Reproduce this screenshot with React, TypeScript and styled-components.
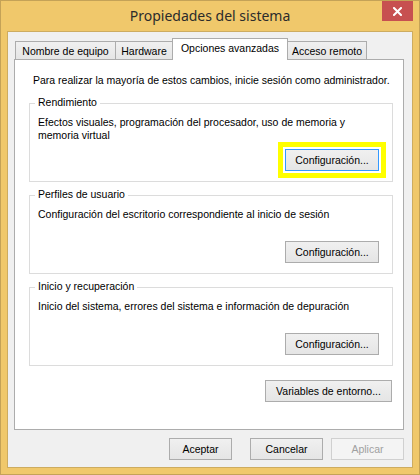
import React from "react";
import styled, { createGlobalStyle } from "styled-components";

const GlobalStyle = createGlobalStyle`
  * { box-sizing: border-box; }
  body {
    margin: 0;
    background: #ffffff;
    font-family: "Liberation Sans", Arial, sans-serif;
    font-size: 10.5px;
    color: #000;
  }
`;

const tabs = [
  { label: "Nombre de equipo", width: 101 },
  { label: "Hardware", width: 58 },
  { label: "Opciones avanzadas", width: 116, active: true },
  { label: "Acceso remoto", width: 80 },
];

const groups = [
  {
    title: "Rendimiento",
    text: "Efectos visuales, programación del procesador, uso de memoria y memoria virtual",
    highlighted: true,
  },
  {
    title: "Perfiles de usuario",
    text: "Configuración del escritorio correspondiente al inicio de sesión",
  },
  {
    title: "Inicio y recuperación",
    text: "Inicio del sistema, errores del sistema e información de depuración",
  },
];

const CloseIcon = () => (
  <svg width="9" height="9" viewBox="0 0 9 9">
    <path d="M1 1 L8 8 M8 1 L1 8" stroke="#fff" strokeWidth="2" strokeLinecap="square" />
  </svg>
);

const SystemProperties = () => {
  return (
    <Window>
      <TitleBar>
        <Title>Propiedades del sistema</Title>
        <CloseButton aria-label="Cerrar">
          <CloseIcon />
        </CloseButton>
      </TitleBar>

      <Client>
        <TabStrip>
          {tabs.map((t) => (
            <Tab key={t.label} active={!!t.active} w={t.width}>
              {t.label}
            </Tab>
          ))}
        </TabStrip>

        <Panel>
          <Intro>
            Para realizar la mayoría de estos cambios, inicie sesión como administrador.
          </Intro>

          {groups.map((g) => (
            <GroupBox key={g.title}>
              <Legend>{g.title}</Legend>
              <Description>{g.text}</Description>
              <GroupButton highlighted={!!g.highlighted} focused={!!g.highlighted}>
                Configuración...
              </GroupButton>
            </GroupBox>
          ))}

          <EnvButton>Variables de entorno...</EnvButton>
        </Panel>

        <DialogButtons>
          <Button w={63}>Aceptar</Button>
          <CancelButton w={73}>Cancelar</CancelButton>
          <Button w={73} disabled>
            Aplicar
          </Button>
        </DialogButtons>
      </Client>
    </Window>
  );
};

export default function App() {
  return (
    <>
      <GlobalStyle />
      <SystemProperties />
    </>
  );
}

const Window = styled.div`
  width: 420px;
  height: 475px;
  background: #f0c86b;
  border: 1px solid #c4a257;
  display: flex;
  flex-direction: column;
`;

const TitleBar = styled.div`
  height: 30px;
  display: grid;
  grid-template-columns: 1fr auto 1fr;
  align-items: center;
`;

const Title = styled.div`
  grid-column: 2;
  font-family: "Noto Sans", "Open Sans", sans-serif;
  font-size: 14px;
  color: #2b2b2b;
  padding-bottom: 2px;
  white-space: nowrap;
`;

const CloseButton = styled.div`
  grid-column: 3;
  justify-self: end;
  align-self: start;
  width: 31px;
  height: 20px;
  margin-right: 6px;
  background: #c75050;
  display: flex;
  align-items: center;
  justify-content: center;
`;

const Client = styled.div`
  flex: 1;
  margin: 0 6px 6px 6px;
  border: 1px solid #cdac60;
  background: #f0f0f0;
  padding: 6px 8px 7px 6px;
  display: flex;
  flex-direction: column;
`;

const TabStrip = styled.div`
  height: 21px;
  display: flex;
  align-items: flex-end;
  padding-left: 1px;
  position: relative;
  z-index: 1;
`;

const Tab = styled.div<{ active: boolean; w: number }>`
  width: ${(p) => p.w}px;
  height: ${(p) => (p.active ? "22px" : "18px")};
  margin-bottom: ${(p) => (p.active ? "-1px" : "0")};
  margin-left: -1px;
  &:first-child {
    margin-left: 0;
  }
  border: 1px solid #acacac;
  border-bottom: none;
  background: ${(p) =>
    p.active ? "#ffffff" : "linear-gradient(#f0f0f0, #e5e5e5)"};
  display: flex;
  align-items: center;
  justify-content: center;
  padding-bottom: ${(p) => (p.active ? "3px" : "0")};
  white-space: nowrap;
  position: relative;
  z-index: ${(p) => (p.active ? 2 : 1)};
`;

const Panel = styled.div`
  height: 371px;
  background: #ffffff;
  border: 1px solid #acacac;
  padding: 14px 10px 0 14px;
  display: flex;
  flex-direction: column;
`;

const Intro = styled.div`
  line-height: 13px;
  padding-left: 4px;
  white-space: nowrap;
  margin-bottom: 16px;
`;

const GroupBox = styled.div`
  position: relative;
  height: 79px;
  border: 1px solid #dcdcdc;
  padding: 12px 13px 10px 8px;
  display: flex;
  flex-direction: column;
  & + & {
    margin-top: 13px;
  }
`;

const Legend = styled.span`
  position: absolute;
  top: -8px;
  left: 5px;
  padding: 0 3px;
  line-height: 13px;
  background: #ffffff;
  white-space: nowrap;
`;

const Description = styled.div`
  line-height: 13px;
  max-width: 335px;
`;

const Button = styled.button<{ w?: number; focused?: boolean; highlighted?: boolean }>`
  width: ${(p) => (p.w ? `${p.w}px` : "auto")};
  height: 22px;
  padding: 0 6px;
  font-family: "Liberation Sans", Arial, sans-serif;
  font-size: 10.5px;
  color: #000;
  border: 1px solid ${(p) => (p.focused ? "#3399ff" : "#acacac")};
  background: linear-gradient(#f0f0f0, #e5e5e5);
  border-radius: 0;
  white-space: nowrap;
  outline: ${(p) => (p.highlighted ? "5px solid #ffff00" : "none")};
  outline-offset: 2px;
  cursor: default;

  &:disabled {
    color: #a0a0a0;
    border-color: #d0d0d0;
    background: #f4f4f4;
  }
`;

const CancelButton = styled(Button)`
  margin-left: 10px;
`;

const GroupButton = styled(Button)`
  width: 94px;
  margin-top: auto;
  align-self: flex-end;
`;

const EnvButton = styled(Button)`
  width: 127px;
  margin-top: 14px;
  margin-right: 1px;
  align-self: flex-end;
`;

const DialogButtons = styled.div`
  margin-top: 8px;
  display: flex;
  justify-content: flex-end;
  gap: 8px;
`;
